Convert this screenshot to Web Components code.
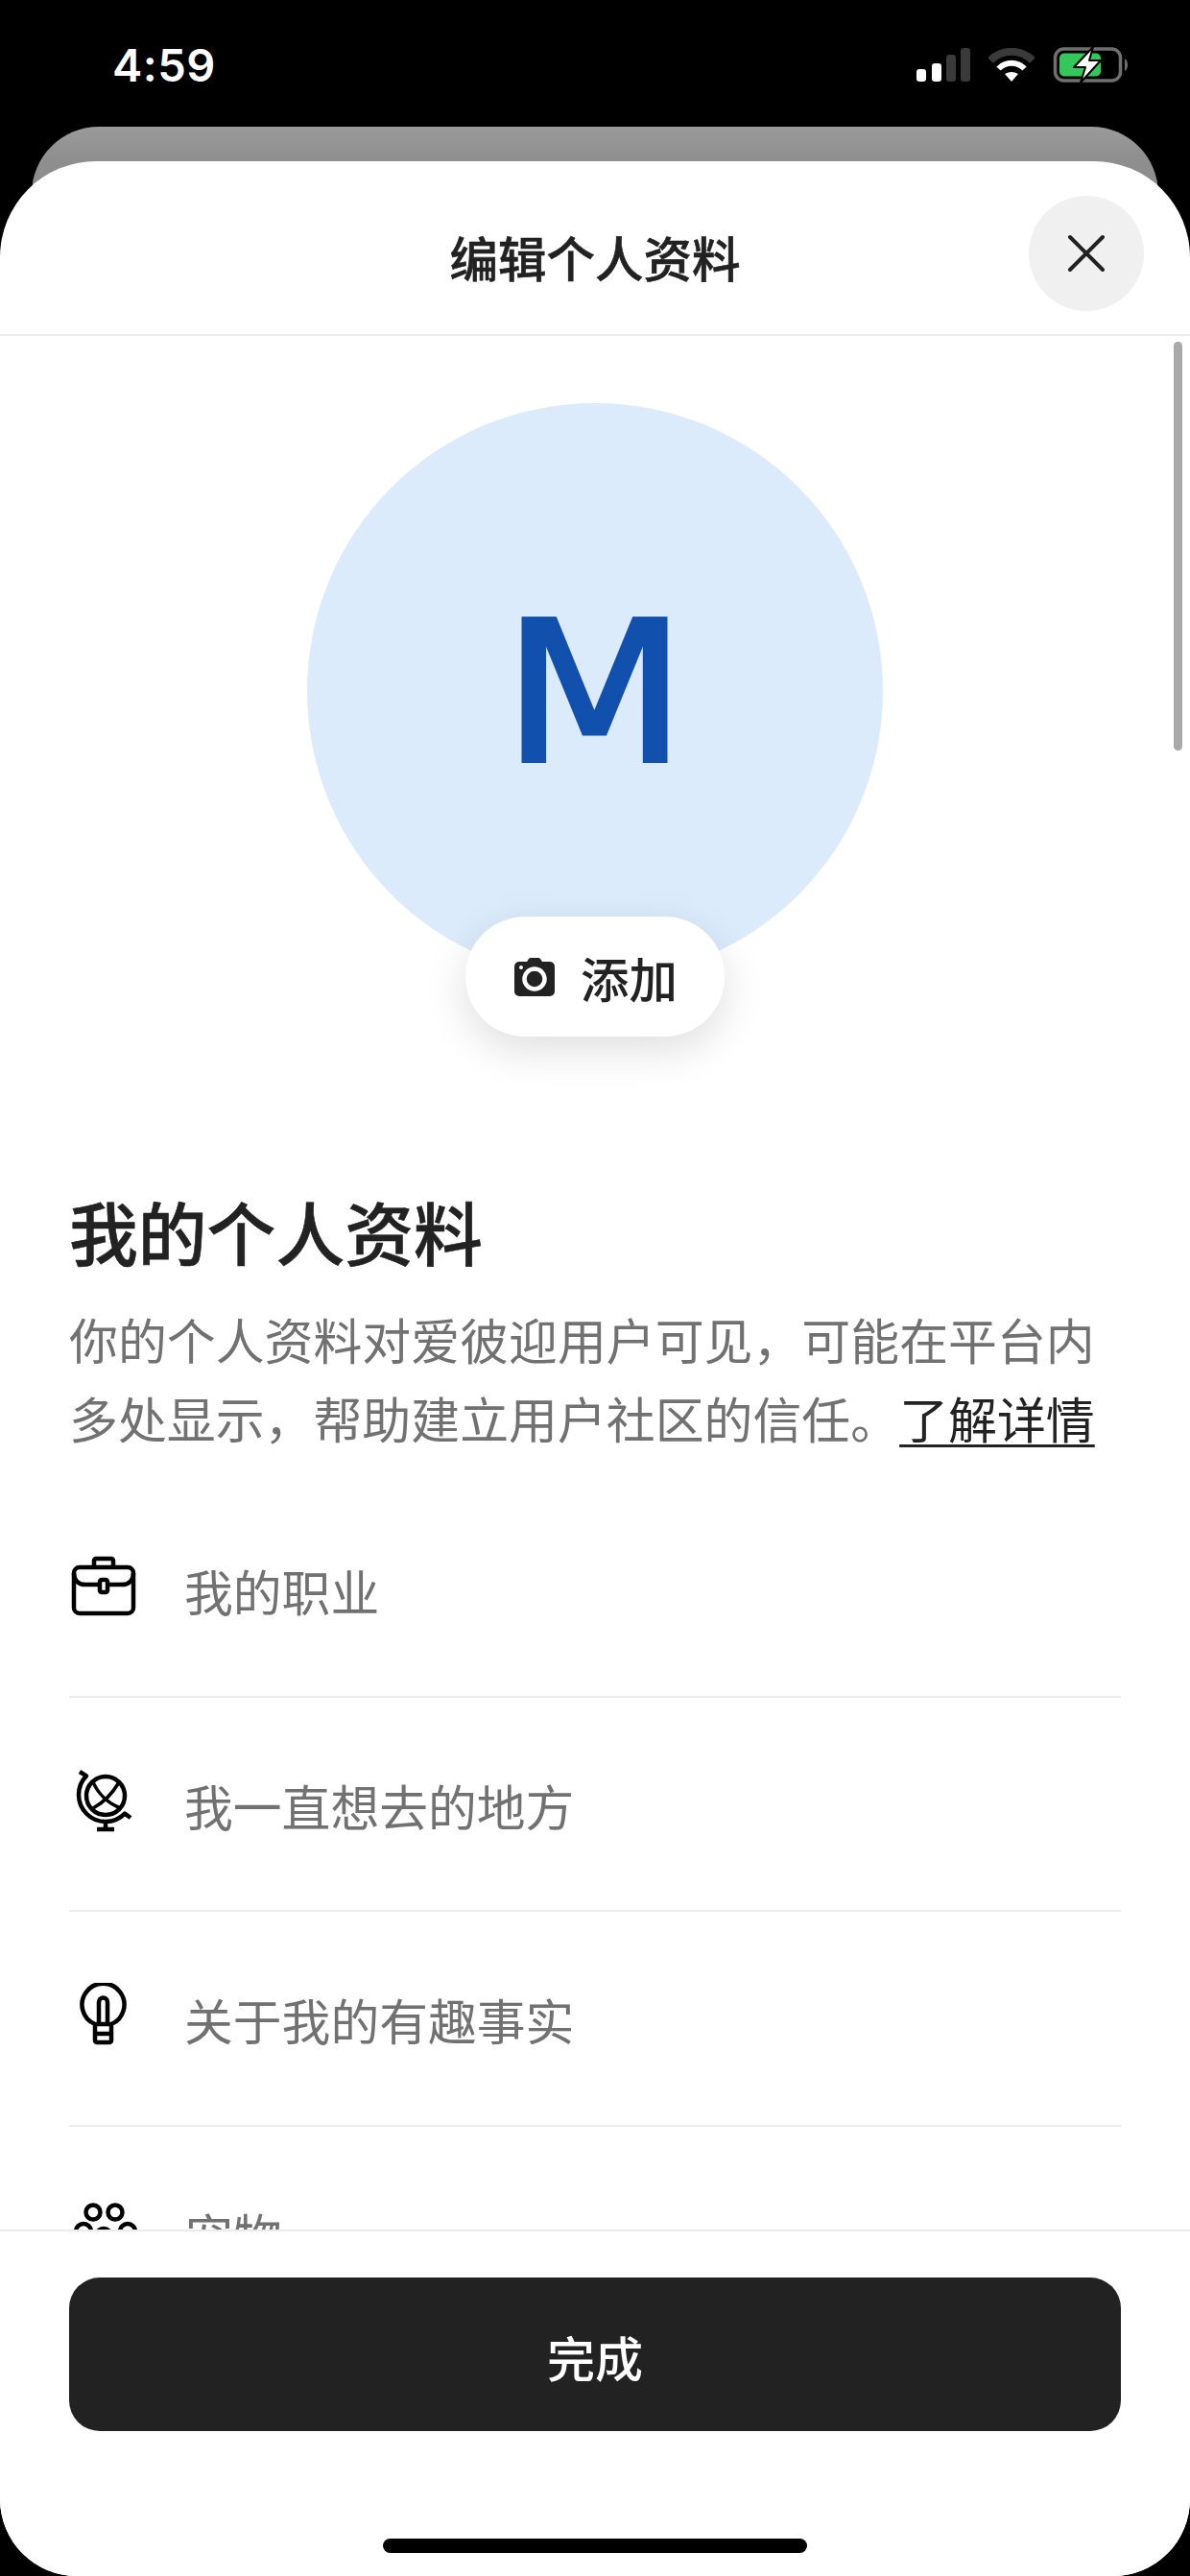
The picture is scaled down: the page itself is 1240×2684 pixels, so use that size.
<html lang="zh">
<head>
<meta charset="utf-8">
<style>
  html, body { margin: 0; background: #000; }
  body {
    width: 1240px;
    height: 2684px;
    overflow: hidden;
    font-family: "Inter", "Noto Sans CJK SC", sans-serif;
    color: #222;
  }
  svg { display: block; }
</style>
</head>
<body>
<profile-sheet>
  <status-bar slot="status"></status-bar>
  <sheet-header slot="header">编辑个人资料</sheet-header>
  <avatar-block letter="M"></avatar-block>
  <intro-block>
    <span slot="title">我的个人资料</span>
    <div>你的个人资料对爱彼迎用户可见，可能在平台内</div>
    <div><span>多处显示，帮助建立用户社区的信任。</span><a>了解详情</a></div>
  </intro-block>
  <profile-row>
    <svg slot="icon" width="72" height="72" viewBox="0 0 72 72" fill="none" stroke="#000" stroke-width="4.500">
      <rect x="5" y="14" width="62" height="48" rx="6"/>
      <path d="M26 13V7a2 2 0 0 1 2-2h16a2 2 0 0 1 2 2v6"/>
      <path d="M5 20c0 8 5 12 12 12h13M42 32h13c7 0 12-4 12-12"/>
      <rect x="32" y="27" width="8" height="13" rx="2"/>
    </svg>
    我的职业
  </profile-row>
  <profile-row>
    <svg slot="icon" width="72" height="72" viewBox="0 0 72 72" fill="none" stroke="#000" stroke-width="4.500">
      <circle cx="38" cy="28" r="20"/>
      <path d="M25 14c5 11 15 22 29 27M52 14c-7 12-16 21-27 27" stroke-width="3.500"/>
      <path d="M11 3l7 4.400A28 28 0 0 0 58 46.600l6 4.400" stroke-linejoin="round"/>
      <path d="M38 55v8M29 63h18"/>
    </svg>
    我一直想去的地方
  </profile-row>
  <profile-row>
    <svg slot="icon" width="72" height="72" viewBox="0 0 72 72" fill="none" stroke="#000" stroke-width="4.500">
      <path d="M27 43A22 22 0 1 1 44 43"/>
      <path d="M31 43V20a4.500 4.500 0 0 1 9 0v23"/>
      <rect x="27" y="43" width="17" height="19" rx="2"/>
      <path d="M27 53h17"/>
    </svg>
    关于我的有趣事实
  </profile-row>
  <profile-row>
    <svg slot="icon" width="72" height="72" viewBox="0 0 72 72" fill="none" stroke="#000" stroke-width="4.500">
      <circle cx="25" cy="15" r="7.500"/>
      <circle cx="48" cy="15" r="7.500"/>
      <circle cx="15" cy="35" r="8"/>
      <circle cx="36" cy="40" r="8"/>
      <circle cx="61" cy="35" r="8"/>
    </svg>
    宠物
  </profile-row>
  <sheet-footer slot="footer">完成</sheet-footer>
</profile-sheet>

<script type="module">
  class ProfileSheet extends HTMLElement {
    constructor() {
      super();
      this.attachShadow({mode: "open"});
      this.shadowRoot.innerHTML = `
      <style>
        :host { display: block; width: 1240px; height: 2684px; }
        .back {
          height: 120px;
          margin: 0 33px -84px;
          border-radius: 70px 70px 0 0;
          background: linear-gradient(#9a9a9a, #8e8e8e 30%);
        }
        .sheet {
          position: relative;
          display: flex;
          flex-direction: column;
          height: 2516px;
          background: #fff;
          border-radius: 100px 100px 80px 80px;
          overflow: hidden;
        }
        .scroll { position: relative; flex: 1; min-height: 0; overflow: hidden; }
        .thumb {
          position: absolute;
          top: 6px;
          right: 8px;
          width: 9px;
          height: 426px;
          border-radius: 5px;
          background: #a9a9a9;
        }
      </style>
      <slot name="status"></slot>
      <div class="back"></div>
      <div class="sheet">
        <slot name="header"></slot>
        <div class="scroll">
          <slot></slot>
          <div class="thumb"></div>
        </div>
        <slot name="footer"></slot>
      </div>
      `;
    }
  }

  class StatusBar extends HTMLElement {
    constructor() {
      super();
      this.attachShadow({mode: "open"});
      this.shadowRoot.innerHTML = `
      <style>
        :host {
          display: flex;
          align-items: flex-start;
          box-sizing: border-box;
          height: 132px;
          padding: 48px 0 0 117px;
          color: #fff;
        }
        .time { font: 600 47px/40px "Inter", sans-serif; flex: 1; letter-spacing: 0.5px; }
        svg { display: block; }
        .signal { margin: 2px 0 0 0; }
        .wifi { margin: 2px 0 0 19px; }
        .battery { margin: 0 63px 0 19px; }
      </style>
      <div class="time">4:59</div>
      <svg class="signal" width="56" height="35" viewBox="0 0 56 35">
        <rect x="0" y="22" width="10" height="13" rx="3" fill="#fff"/>
        <rect x="16" y="16" width="10" height="19" rx="3" fill="#fff"/>
        <rect x="31" y="7" width="10" height="28" rx="3" fill="#3a3a3a"/>
        <rect x="46" y="0" width="10" height="35" rx="3" fill="#3a3a3a"/>
      </svg>
      <svg class="wifi" width="48" height="36" viewBox="0 0 48 36" fill="none">
        <path d="M2 13A31 31 0 0 1 46 13" stroke="#3a3a3a" stroke-width="8"/>
        <path d="M10.500 21.500A19 19 0 0 1 37.500 21.500" stroke="#fff" stroke-width="6"/>
        <path d="M24 35L17 27Q24 23 31 27Z" fill="#fff"/>
      </svg>
      <svg class="battery" width="80" height="40" viewBox="0 0 80 40" fill="none">
        <rect x="2.500" y="3" width="68" height="33" rx="9" stroke="#6f6f6f" stroke-width="3.500"/>
        <path d="M75 13c4 2 4 11 0 13z" fill="#6f6f6f"/>
        <rect x="7" y="7.500" width="43" height="24" rx="5" fill="#34c759"/>
        <path d="M42 1L22 22H34L29 38L50 15H38Z" fill="#fff" stroke="#000" stroke-width="2" stroke-linejoin="round"/>
      </svg>
      `;
    }
  }

  class SheetHeader extends HTMLElement {
    constructor() {
      super();
      this.attachShadow({mode: "open"});
      this.shadowRoot.innerHTML = `
      <style>
        :host {
          display: grid;
          grid-template-columns: 1fr auto 1fr;
          align-items: center;
          box-sizing: border-box;
          height: 182px;
          padding: 36px 48px 24px;
          border-bottom: 2px solid #ebebeb;
          flex: none;
        }
        .title {
          grid-column: 2;
          font: 500 50.500px/60px "Noto Sans CJK SC", sans-serif;
          -webkit-text-stroke: 0.6px #222;
          color: #222;
          margin-top: 6px;
        }
        .close {
          grid-column: 3;
          justify-self: end;
          display: flex;
          align-items: center;
          justify-content: center;
          width: 120px;
          height: 120px;
          border-radius: 50%;
          background: #f0f0f0;
        }
      </style>
      <div class="title"><slot></slot></div>
      <div class="close">
        <svg width="40" height="40" viewBox="0 0 40 40" fill="none" stroke="#222" stroke-width="4" stroke-linecap="round"><path d="M3 3L37 37M37 3L3 37"/></svg>
      </div>
      `;
    }
  }

  class AvatarBlock extends HTMLElement {
    constructor() {
      super();
      this.attachShadow({mode: "open"});
      this.shadowRoot.innerHTML = `
      <style>
        :host {
          display: flex;
          flex-direction: column;
          align-items: center;
          padding-top: 70px;
        }
        .circle {
          display: flex;
          align-items: center;
          justify-content: center;
          width: 600px;
          height: 600px;
          border-radius: 50%;
          background: #dcebfc;
        }
        .letter {
          color: #1150ad;
          font: 400 203px/1 "DejaVu Sans", sans-serif;
          -webkit-text-stroke: 4px #1150ad;
          transform: translateY(3px) scaleX(1.09);
        }
        .pill {
          position: relative;
          display: flex;
          align-items: center;
          gap: 27px;
          box-sizing: border-box;
          width: 270px;
          height: 125px;
          margin-top: -65px;
          padding-left: 51px;
          border-radius: 62px;
          background: #fff;
          box-shadow: 0 14px 44px rgba(0, 0, 0, 0.13);
          font: 500 50.500px/60px "Noto Sans CJK SC", sans-serif;
          color: #222;
        }
      </style>
      <div class="circle"><span class="letter"></span></div>
      <div class="pill">
        <svg width="42" height="40" viewBox="0 0 42 40">
          <path d="M5 4h8l2-3a3 3 0 0 1 2-1h8a3 3 0 0 1 2 1l2 3h8a5 5 0 0 1 5 5v26a5 5 0 0 1-5 5H5a5 5 0 0 1-5-5V9a5 5 0 0 1 5-5z" fill="#222"/>
          <circle cx="21" cy="22" r="10.500" fill="none" stroke="#fff" stroke-width="4.500"/>
          <circle cx="7" cy="10" r="2" fill="#fff"/>
        </svg>
        <span>添加</span>
      </div>
      `;
    }

    connectedCallback() {
      this.shadowRoot.querySelector(".letter").textContent = this.getAttribute("letter");
    }
  }

  class IntroBlock extends HTMLElement {
    constructor() {
      super();
      this.attachShadow({mode: "open"});
      this.shadowRoot.innerHTML = `
      <style>
        :host { display: block; padding: 157px 72px 27px; }
        h1 {
          margin: 0;
          font: 500 71.800px/90px "Noto Sans CJK SC", sans-serif;
          -webkit-text-stroke: 0.6px #222;
          color: #222;
        }
        .body {
          margin: 27px 0 0;
          font: 400 50.900px/82px "Noto Sans CJK SC", sans-serif;
          color: #717171;
          white-space: nowrap;
        }
        ::slotted(div) { display: block; }
      </style>
      <h1><slot name="title"></slot></h1>
      <div class="body"><slot></slot></div>
      `;
    }

    connectedCallback() {
      const link = this.querySelector("a");
      if (link) {
        link.style.color = "#222";
        link.style.textDecoration = "underline";
        link.style.textUnderlineOffset = "6px";
        link.style.textDecorationThickness = "3px";
      }
    }
  }

  class ProfileRow extends HTMLElement {
    constructor() {
      super();
      this.attachShadow({mode: "open"});
      this.shadowRoot.innerHTML = `
      <style>
        :host { display: block; padding: 0 72px; }
        .row {
          display: flex;
          align-items: center;
          gap: 48px;
          box-sizing: border-box;
          height: 223.500px;
          padding-top: 3px;
          border-bottom: 2px solid #ebebeb;
          font: 400 50.800px/60px "Noto Sans CJK SC", sans-serif;
          color: #717171;
        }
        .icon { flex: none; width: 72px; height: 72px; margin-bottom: 4px; }
      </style>
      <div class="row">
        <div class="icon"><slot name="icon"></slot></div>
        <div><slot></slot></div>
      </div>
      `;
    }
  }

  class SheetFooter extends HTMLElement {
    constructor() {
      super();
      this.attachShadow({mode: "open"});
      this.shadowRoot.innerHTML = `
      <style>
        :host {
          display: block;
          flex: none;
          box-sizing: border-box;
          height: 361px;
          padding: 48px 72px 0;
          border-top: 2px solid #ebebeb;
          background: #fff;
        }
        button {
          display: block;
          width: 100%;
          height: 160px;
          padding: 3px 0 0;
          border: 0;
          border-radius: 32px;
          background: #222;
          color: #fff;
          font: 500 50px/60px "Noto Sans CJK SC", sans-serif;
        }
        .home {
          width: 442px;
          height: 15px;
          margin: 112px auto 0;
          border-radius: 8px;
          background: #000;
        }
      </style>
      <button><slot></slot></button>
      <div class="home"></div>
      `;
    }
  }

  customElements.define("profile-sheet", ProfileSheet);
  customElements.define("status-bar", StatusBar);
  customElements.define("sheet-header", SheetHeader);
  customElements.define("avatar-block", AvatarBlock);
  customElements.define("intro-block", IntroBlock);
  customElements.define("profile-row", ProfileRow);
  customElements.define("sheet-footer", SheetFooter);
</script>
</body>
</html>
